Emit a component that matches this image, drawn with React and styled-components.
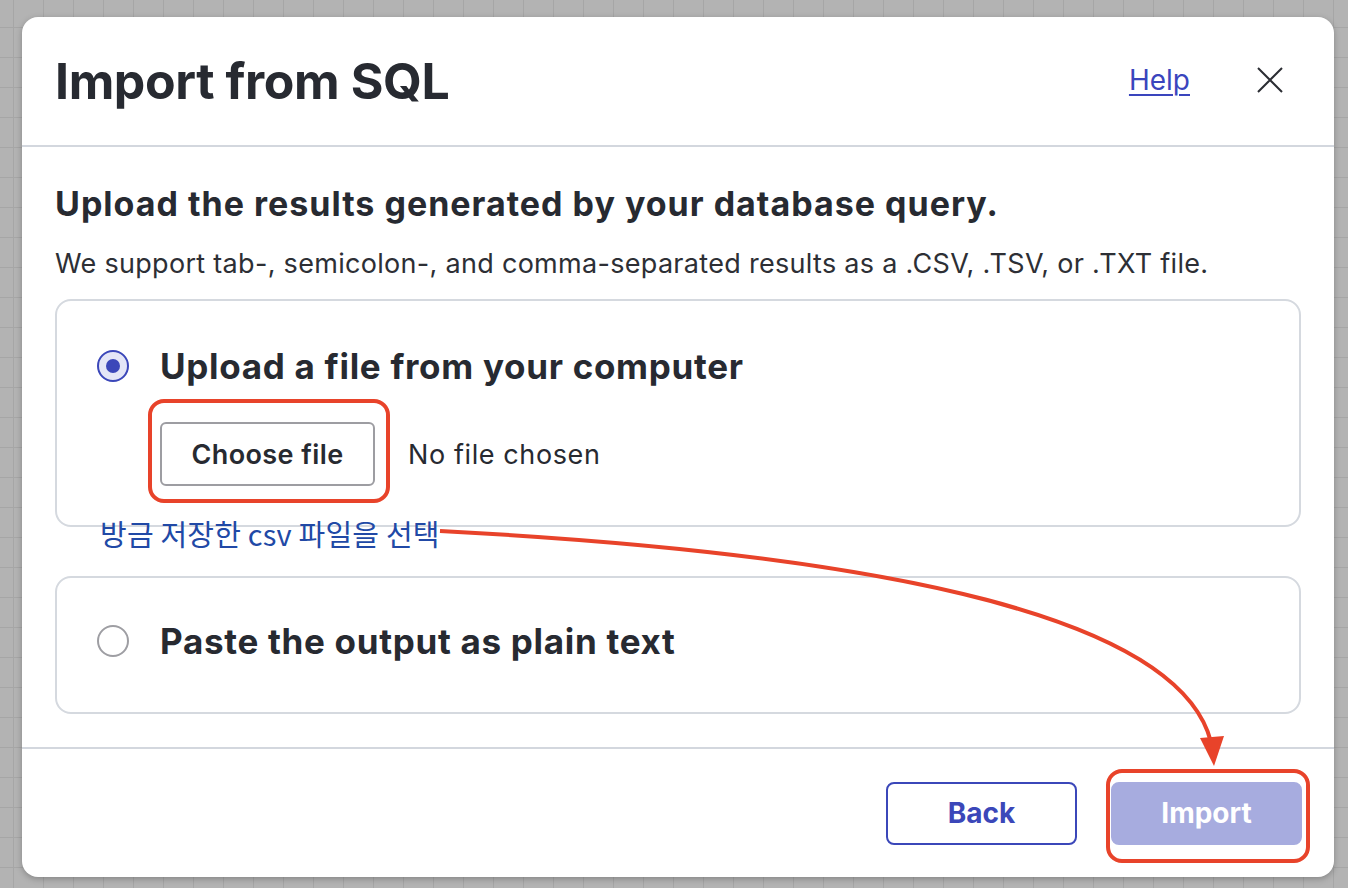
import React from 'react';
import styled, { createGlobalStyle } from 'styled-components';

const GlobalStyle = createGlobalStyle`
  html, body {
    margin: 0;
    padding: 0;
  }
  body {
    width: 1348px;
    height: 888px;
    overflow: hidden;
    font-family: Inter, "Noto Sans", "Liberation Sans", sans-serif;
    color: #282a31;
    background-color: #b3b3b3;
    background-image:
      linear-gradient(to right, #a6a6a6 1px, transparent 1px),
      linear-gradient(to bottom, #a6a6a6 1px, transparent 1px);
    background-size: 30px 30px;
    background-position: 13px 27px;
  }
`;

const Page = styled.div`
  position: relative;
  width: 1348px;
  height: 888px;
  padding: 17px 14px 0 22px;
  box-sizing: border-box;
`;

const Dialog = styled.div`
  width: 1312px;
  height: 860px;
  background: #fff;
  border-radius: 16px;
  box-shadow: 0 2px 6px rgba(0, 0, 0, 0.25);
  display: flex;
  flex-direction: column;
  overflow: hidden;
`;

const Header = styled.div`
  height: 128px;
  display: flex;
  align-items: center;
  padding: 0 50px 0 33px;
  border-bottom: 2px solid #d3d7de;
  flex-shrink: 0;
`;

const Title = styled.h1`
  margin: 0;
  flex: 1;
  font-size: 50px;
  font-weight: 700;
  letter-spacing: -0.4px;
  line-height: 1;
  color: #272a31;
`;

const HelpLink = styled.a`
  font-size: 28px;
  color: #3a45bd;
  text-decoration: underline;
  text-underline-offset: 4px;
  text-decoration-thickness: 2px;
  margin-right: 66px;
  margin-top: -2px;
`;

const CloseButton = styled.button`
  border: none;
  background: none;
  padding: 0;
  width: 28px;
  height: 28px;
  display: flex;
  align-items: center;
  justify-content: center;
  color: #2b2d33;
  margin-top: -2px;
`;

const Body = styled.div`
  flex: 1;
  padding: 37px 33px 0;
  display: flex;
  flex-direction: column;
  border-bottom: 2px solid #d3d7de;
`;

const Heading = styled.h2`
  margin: 0;
  font-size: 34px;
  font-weight: 700;
  letter-spacing: 1px;
  line-height: 40px;
  color: #272a31;
`;

const Lead = styled.p`
  margin: 22px 0 17px;
  font-size: 27px;
  letter-spacing: 0.3px;
  line-height: 36px;
  color: #2d2f35;
`;

const Card = styled.div`
  position: relative;
  border: 2px solid #d5d9df;
  border-radius: 16px;
  padding: ${p => (p.last ? '41px 40px 49px' : '43px 40px 39px')};
  margin-bottom: ${p => (p.last ? '0' : '49px')};
  display: flex;
  flex-direction: column;
  gap: 34px;
`;

const OptionRow = styled.label`
  display: flex;
  align-items: center;
  gap: 31px;
`;

const Radio = styled.span`
  width: 32px;
  height: 32px;
  border-radius: 50%;
  box-sizing: border-box;
  border: 2px solid ${p => (p.checked ? '#3b47b9' : '#9e9ea3')};
  background: ${p => (p.checked ? '#e4e6f7' : '#fff')};
  display: flex;
  align-items: center;
  justify-content: center;
  flex-shrink: 0;

  &::after {
    content: '';
    display: ${p => (p.checked ? 'block' : 'none')};
    width: 14px;
    height: 14px;
    border-radius: 50%;
    background: #3b47b9;
  }
`;

const OptionLabel = styled.span`
  font-size: 35px;
  font-weight: 700;
  letter-spacing: 0.7px;
  line-height: 44px;
  color: #272a31;
`;

const FileRow = styled.div`
  display: flex;
  align-items: center;
  gap: 33px;
  padding-left: 63px;
`;

const Highlight = styled.div`
  position: relative;

  &::after {
    content: '';
    position: absolute;
    inset: ${p => p.inset || '-12px'};
    border: 4px solid #e8432a;
    border-radius: 16px;
    pointer-events: none;
  }
`;

const FileButton = styled.button`
  width: 215px;
  height: 64px;
  box-sizing: border-box;
  border: 2px solid #9d9da2;
  border-radius: 6px;
  background: #fff;
  font-family: inherit;
  font-size: 27px;
  font-weight: 600;
  letter-spacing: 0.4px;
  color: #272a31;
`;

const FileStatus = styled.span`
  font-size: 27px;
  letter-spacing: 0.6px;
  color: #272a31;
`;

const Note = styled.span`
  position: absolute;
  left: 43px;
  bottom: -26px;
  font-size: 29px;
  line-height: 36px;
  color: #2149a6;
  font-family: "Noto Sans CJK KR", "Noto Sans", sans-serif;
  letter-spacing: 0.2px;
  white-space: nowrap;
`;

const Footer = styled.div`
  height: 128px;
  display: flex;
  align-items: center;
  justify-content: flex-end;
  gap: 34px;
  padding: 0 32px 0 0;
  flex-shrink: 0;
`;

const ActionButton = styled.button`
  width: 191px;
  height: 63px;
  box-sizing: border-box;
  border-radius: 8px;
  font-family: inherit;
  font-size: 28px;
  font-weight: 700;
  border: 2px solid ${p => (p.primary ? '#a7acdf' : '#3b47b9')};
  background: ${p => (p.primary ? '#a7acdf' : '#fff')};
  color: ${p => (p.primary ? '#fff' : '#3b47b9')};
`;

const ArrowLayer = styled.svg`
  position: absolute;
  left: 0;
  top: 0;
  width: 1348px;
  height: 888px;
  pointer-events: none;
`;

export default function App() {
  return (
    <Page>
      <GlobalStyle />
      <Dialog>
        <Header>
          <Title>Import from SQL</Title>
          <HelpLink href="#">Help</HelpLink>
          <CloseButton aria-label="Close">
            <svg width="26" height="26" viewBox="0 0 26 26">
              <path d="M1 1 L25 25 M25 1 L1 25" stroke="currentColor" strokeWidth="2" fill="none" />
            </svg>
          </CloseButton>
        </Header>
        <Body>
          <Heading>Upload the results generated by your database query.</Heading>
          <Lead>We support tab-, semicolon-, and comma-separated results as a .CSV, .TSV, or .TXT file.</Lead>
          <Card>
            <OptionRow>
              <Radio checked />
              <OptionLabel>Upload a file from your computer</OptionLabel>
            </OptionRow>
            <FileRow>
              <Highlight inset="-23px -15px -17px -12px">
                <FileButton>Choose file</FileButton>
              </Highlight>
              <FileStatus>No file chosen</FileStatus>
            </FileRow>
            <Note>방금 저장한 csv 파일을 선택</Note>
          </Card>
          <Card last>
            <OptionRow>
              <Radio />
              <OptionLabel>Paste the output as plain text</OptionLabel>
            </OptionRow>
          </Card>
        </Body>
        <Footer>
          <ActionButton>Back</ActionButton>
          <Highlight inset="-13px -8px -18px -5px">
            <ActionButton primary>Import</ActionButton>
          </Highlight>
        </Footer>
      </Dialog>
      <ArrowLayer viewBox="0 0 1348 888">
        <path d="M440 531 C900 555, 1180 620, 1211 742" stroke="#e8432a" strokeWidth="4" fill="none" />
        <path d="M1200 738 L1224 736 L1214 766 Z" fill="#e8432a" />
      </ArrowLayer>
    </Page>
  );
}
